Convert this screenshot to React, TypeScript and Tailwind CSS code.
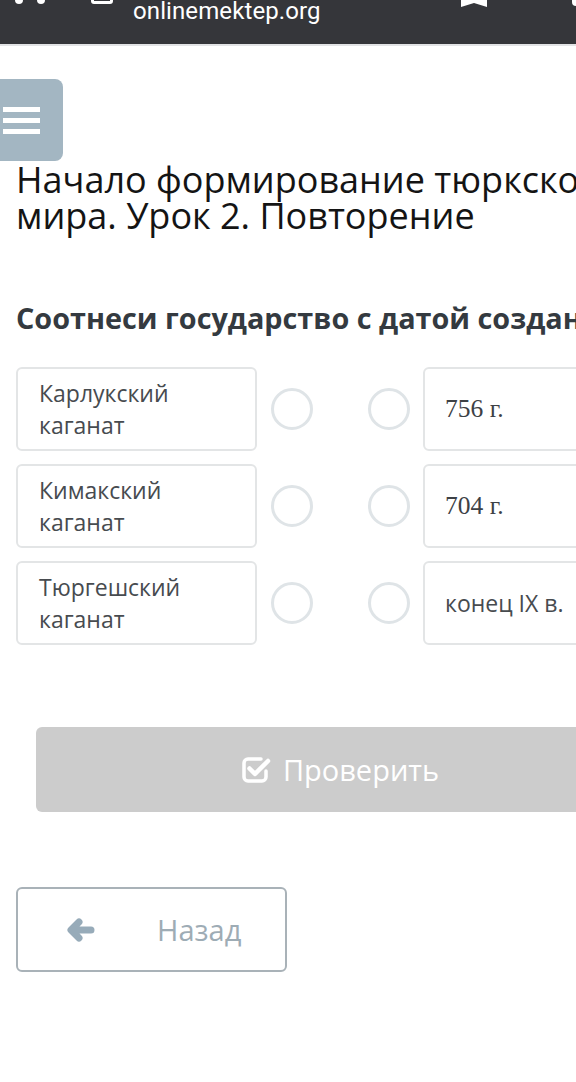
import React from "react";

const rows = [
  { left: ["Карлукский", "каганат"], right: "756 г.", serif: true },
  { left: ["Кимакский", "каганат"], right: "704 г.", serif: true },
  { left: ["Тюргешский", "каганат"], right: "конец IX в.", serif: false },
];

function CheckSquare() {
  return (
    <svg width="30" height="28" viewBox="0 0 30 28" fill="none">
      <path
        d="M20 3H7a4 4 0 0 0-4 4v14a4 4 0 0 0 4 4h14a4 4 0 0 0 4-4v-6"
        stroke="white"
        strokeWidth="3.5"
        strokeLinecap="round"
      />
      <path
        d="M8.5 12.5l5.5 5.5L27 5"
        stroke="white"
        strokeWidth="4.5"
        strokeLinecap="round"
        strokeLinejoin="round"
      />
    </svg>
  );
}

function ArrowLeft() {
  return (
    <svg width="30" height="26" viewBox="0 0 30 26" fill="none">
      <path
        d="M26 13H7M14 5l-8 8 8 8"
        stroke="#97abb9"
        strokeWidth="7"
        strokeLinecap="round"
        strokeLinejoin="round"
      />
    </svg>
  );
}

export default function App() {
  return (
    <div
      className="relative w-[576px] min-h-[1082px] overflow-hidden bg-white"
      style={{ fontFamily: '"Open Sans", "Noto Sans", sans-serif' }}
    >
      {/* browser bar */}
      <div className="relative h-[46px] bg-[#35363a] border-b-2 border-[#e2e3e5] overflow-hidden">
        <div className="flex items-start h-full">
          <div className="ml-[15px] -mt-[8px] flex gap-[14px]">
            <span className="block w-[8px] h-[12px] rounded-full bg-white" />
            <span className="block w-[8px] h-[12px] rounded-full bg-white" />
          </div>
          <span className="ml-[46px] -mt-[6px] block w-[22px] h-[10px] rounded-[3px] border-[3px] border-white" />
          <span
            className="ml-[20px] -mt-[8px] text-[24px] leading-[38px] text-white tracking-[0.1px] whitespace-nowrap"
            style={{ fontFamily: "Roboto, sans-serif" }}
          >
            onlinemektep.org
          </span>
          <svg className="ml-[138px] shrink-0" width="30" height="8" viewBox="0 0 30 8">
            <path d="M2 0h26v7l-13-4-13 4z" fill="white" />
          </svg>
          <span className="ml-auto mr-[-4px] -mt-[4px] block w-[8px] h-[10px] rounded-full bg-white" />
        </div>
      </div>

      {/* menu button */}
      <div className="mt-[33px] -ml-[20px] w-[83px] h-[82px] rounded-[8px] bg-[#a3b6c2] flex flex-col justify-center gap-[6px] pl-[23px]">
        <span className="block w-[37px] h-[5px] bg-white" />
        <span className="block w-[37px] h-[5px] bg-white" />
        <span className="block w-[37px] h-[5px] bg-white" />
      </div>

      <div className="pl-[16px]">
        <h1 className="mt-[1px] text-[36px] leading-[36px] text-[#141414] whitespace-nowrap font-normal">
          <div>Начало формирование тюркского</div>
          <div>мира. Урок 2. Повторение</div>
        </h1>

        <div className="mt-[67px] text-[28.8px] leading-[34px] font-bold text-[#343a40] whitespace-nowrap">
          Соотнеси государство с датой создания
        </div>

        <div className="mt-[32px] flex flex-col gap-[13px]">
          {rows.map((r, i) => (
            <div key={i} className="flex items-center">
              <div className="w-[241px] h-[84px] shrink-0 rounded-[6px] border-2 border-[#e3e5e6] px-[21px] py-[8px] text-[23px] leading-[32px] text-[#474b4f]">
                <div>{r.left[0]}</div>
                <div>{r.left[1]}</div>
              </div>
              <div className="ml-[14px] w-[42px] h-[42px] shrink-0 rounded-full border-[3px] border-[#dfe4e7]" />
              <div className="ml-[55px] w-[42px] h-[42px] shrink-0 rounded-full border-[3px] border-[#dfe4e7]" />
              <div className="ml-[13px] w-[241px] h-[84px] shrink-0 rounded-[6px] border-2 border-[#e3e5e6] px-[20px] flex items-center">
                {r.serif ? (
                  <span
                    className="text-[25.5px] text-[#3d4145]"
                    style={{ fontFamily: '"Liberation Serif", serif' }}
                  >
                    {r.right}
                  </span>
                ) : (
                  <span className="text-[23px] text-[#474b4f] whitespace-nowrap">{r.right}</span>
                )}
              </div>
            </div>
          ))}
        </div>

        <div className="mt-[82px] ml-[20px] w-[608px] h-[85px] rounded-[6px] bg-[#cccccc] flex items-center justify-center gap-[12px]">
          <CheckSquare />
          <span className="text-[29px] text-white">Проверить</span>
        </div>

        <div className="mt-[75px] w-[271px] h-[85px] rounded-[6px] border-2 border-[#a9b2b8] flex items-center pl-[47px]">
          <ArrowLeft />
          <span className="ml-[62px] text-[29px] text-[#9eacb5]">Назад</span>
        </div>
      </div>
    </div>
  );
}
